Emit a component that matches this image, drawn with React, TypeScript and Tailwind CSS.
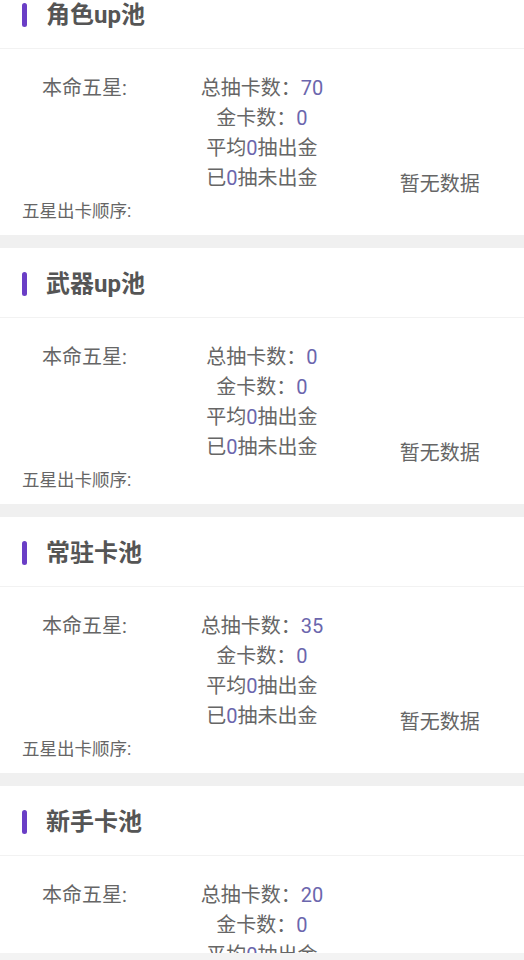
import React from 'react';

type Pool = {
  name: string;
  total: number;
  gold: number;
  avg: number;
  since: number;
};

const pools: Pool[] = [
  { name: '角色up池', total: 70, gold: 0, avg: 0, since: 0 },
  { name: '武器up池', total: 0, gold: 0, avg: 0, since: 0 },
  { name: '常驻卡池', total: 35, gold: 0, avg: 0, since: 0 },
  { name: '新手卡池', total: 20, gold: 0, avg: 0, since: 0 },
];

const Num: React.FC<{ v: number }> = ({ v }) => <span className="text-[#6b66ad]">{v}</span>;

const PoolCard: React.FC<{ pool: Pool }> = ({ pool }) => (
  <section className="bg-white">
    {/* Header */}
    <div className="h-[70px] flex items-center px-[22px] pt-[3px] border-b border-[#f2f2f2]">
      <span className="w-[5px] h-[24px] rounded-full bg-[#6a3ec6] mr-[19px]" />
      <h2 className="text-[24px] font-bold text-[#555555] leading-none">{pool.name}</h2>
    </div>

    {/* Body */}
    <div className="pt-[24px] pb-[12px]">
      <div className="grid grid-cols-3 h-[120px] text-[20px] leading-[30px] text-[#666666]">
        <div className="text-center pr-[6px]">本命五星:</div>
        <div className="text-center">
          <div>总抽卡数：<Num v={pool.total} /></div>
          <div>金卡数：<Num v={pool.gold} /></div>
          <div>平均<Num v={pool.avg} />抽出金</div>
          <div>已<Num v={pool.since} />抽未出金</div>
        </div>
        <div className="text-center pt-[96px] pl-[6px]">暂无数据</div>
      </div>
      <div className="mt-[6px] px-[22px] text-[17.5px] leading-[24px] text-[#666666]">五星出卡顺序:</div>
    </div>
  </section>
);

export default function App() {
  return (
    <div
      className="min-h-screen bg-[#f0f0f0] overflow-hidden"
      style={{ fontFamily: 'Roboto, "Noto Sans CJK SC", "Noto Sans", sans-serif' }}
    >
      <div className="-mt-[21px] flex flex-col gap-[13px]">
        {pools.map((p) => (
          <PoolCard key={p.name} pool={p} />
        ))}
      </div>
      <div className="fixed bottom-0 left-0 right-0 h-[7px] bg-[#f3f3f3]" />
    </div>
  );
}
